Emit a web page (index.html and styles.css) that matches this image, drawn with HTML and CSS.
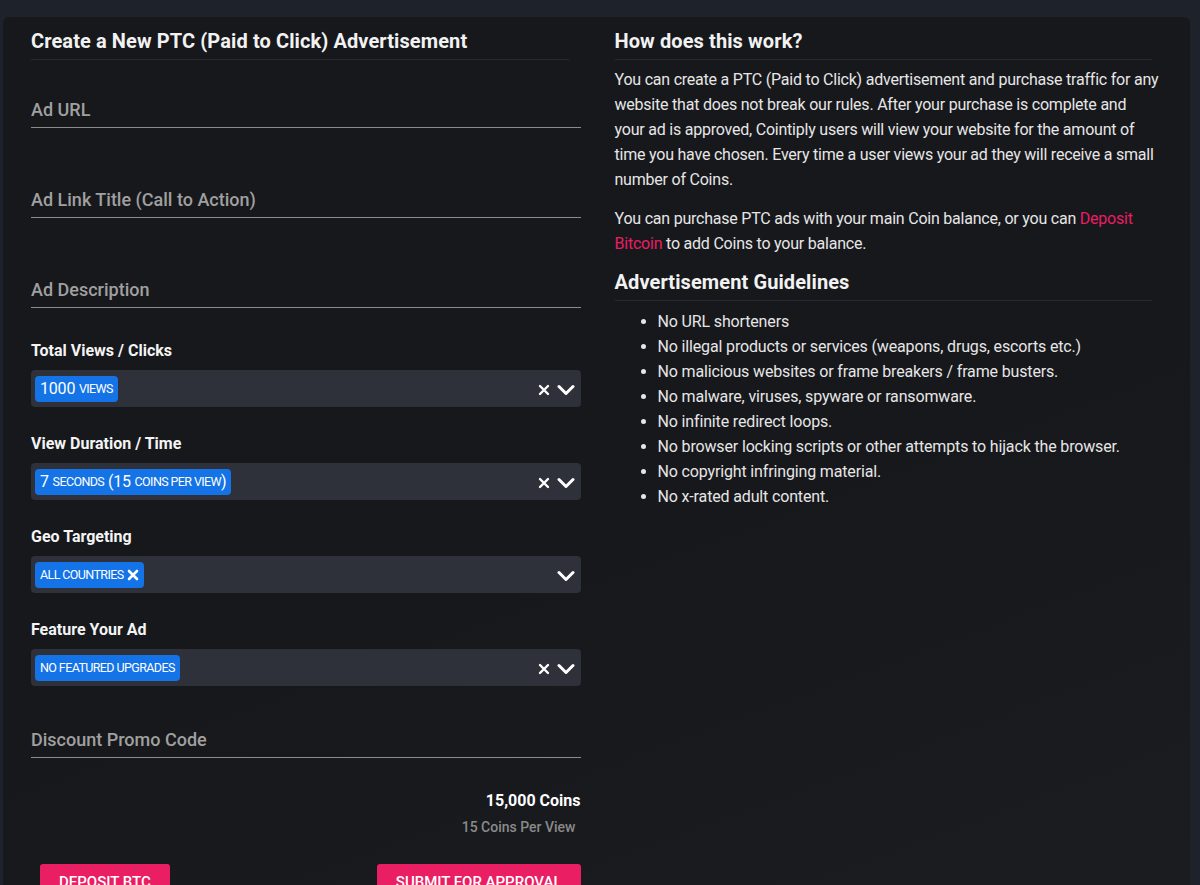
FILE: index.html
```html
<!DOCTYPE html>
<html lang="en">
<head>
    <meta charset="UTF-8">
    <meta name="viewport" content="width=device-width, initial-scale=1.0">
    <title>Create PTC Advertisement</title>
    <link rel="stylesheet" href="styles.css">
</head>
<body>

    <div class="card">
        <!-- left: the ad form -->
        <form class="ad-form">
            <h2 class="section-title">Create a New PTC (Paid to Click) Advertisement</h2>

            <div class="line-field first">Ad URL</div>
            <div class="line-field">Ad Link Title (Call to Action)</div>
            <div class="line-field">Ad Description</div>

            <label class="field-label">Total Views / Clicks</label>
            <div class="select-box">
                <span class="tag">1000 <small>views</small></span>
                <span class="select-icons">
                    <svg class="icon-clear" width="12" height="12" viewBox="0 0 12 12"><path d="M2 2L10 10M10 2L2 10"/></svg>
                    <svg class="icon-chevron" width="18" height="12" viewBox="0 0 18 12"><path d="M2 2.5L9 9.5L16 2.5"/></svg>
                </span>
            </div>

            <label class="field-label">View Duration / Time</label>
            <div class="select-box">
                <span class="tag">7 <small>seconds</small> (15 <small>coins per view</small>)</span>
                <span class="select-icons">
                    <svg class="icon-clear" width="12" height="12" viewBox="0 0 12 12"><path d="M2 2L10 10M10 2L2 10"/></svg>
                    <svg class="icon-chevron" width="18" height="12" viewBox="0 0 18 12"><path d="M2 2.5L9 9.5L16 2.5"/></svg>
                </span>
            </div>

            <label class="field-label">Geo Targeting</label>
            <div class="select-box">
                <span class="tag"><small>all countries</small><svg class="tag-remove" width="12" height="12" viewBox="0 0 12 12"><path d="M2 2L10 10M10 2L2 10"/></svg></span>
                <span class="select-icons">
                    <svg class="icon-chevron" width="18" height="12" viewBox="0 0 18 12"><path d="M2 2.5L9 9.5L16 2.5"/></svg>
                </span>
            </div>

            <label class="field-label">Feature Your Ad</label>
            <div class="select-box">
                <span class="tag"><small>no featured upgrades</small></span>
                <span class="select-icons">
                    <svg class="icon-clear" width="12" height="12" viewBox="0 0 12 12"><path d="M2 2L10 10M10 2L2 10"/></svg>
                    <svg class="icon-chevron" width="18" height="12" viewBox="0 0 18 12"><path d="M2 2.5L9 9.5L16 2.5"/></svg>
                </span>
            </div>

            <div class="line-field promo">Discount Promo Code</div>

            <div class="total">15,000 Coins</div>
            <div class="per-view">15 Coins Per View</div>

            <div class="actions">
                <button type="button" class="btn">Deposit BTC</button>
                <button type="submit" class="btn">Submit for Approval</button>
            </div>
        </form>

        <!-- right: explanation -->
        <div class="info">
            <h2 class="section-title">How does this work?</h2>
            <p>You can create a PTC (Paid to Click) advertisement and purchase traffic for any website that does not break our rules. After your purchase is complete and<br>your ad is approved, Cointiply users will view your website for the amount of time you have chosen. Every time a user views your ad they will receive a small number of Coins.</p>
            <p>You can purchase PTC ads with your main Coin balance, or you can <a href="#">Deposit Bitcoin</a> to add Coins to your balance.</p>

            <h2 class="section-title">Advertisement Guidelines</h2>
            <ul class="rules">
                <li>No URL shorteners</li>
                <li>No illegal products or services (weapons, drugs, escorts etc.)</li>
                <li>No malicious websites or frame breakers / frame busters.</li>
                <li>No malware, viruses, spyware or ransomware.</li>
                <li>No infinite redirect loops.</li>
                <li>No browser locking scripts or other attempts to hijack the browser.</li>
                <li>No copyright infringing material.</li>
                <li>No x-rated adult content.</li>
            </ul>
        </div>
    </div>

</body>
</html>
```

FILE: styles.css
```css
body {
    font-family: Roboto, "Liberation Sans", sans-serif;
    margin: 0;
    padding: 17px 10px 0 3px;
    background-color: #1e222b;
    color: #e6e6e6;
    height: 868px;
    overflow: hidden;
}

.card {
    display: grid;
    grid-template-columns: 1fr 1fr;
    column-gap: 34px;
    padding: 12px 26px 40px 28px;
    border-radius: 6px;
    background: linear-gradient(160deg, #17181c 0%, #17181c 55%, #1c1d21 100%);
    min-height: 900px;
}

.section-title {
    margin: 0 12px 0 0;
    padding-bottom: 6px;
    border-bottom: 1px solid #262a31;
    font-size: 20px;
    line-height: 24px;
    font-weight: 700;
    letter-spacing: 0.1px;
    color: #f2f2f2;
}

/* left column */
.ad-form {
    display: flex;
    flex-direction: column;
}

.line-field {
    height: 36px;
    line-height: 38px;
    margin-top: 53px;
    border-bottom: 1px solid #8c8c8c;
    font-size: 18px;
    font-weight: 500;
    color: #a0a0a0;
}

.line-field.first {
    margin-top: 31px;
}

.line-field.promo {
    margin-top: 35px;
}

.field-label {
    margin-top: 27px;
    font-size: 16px;
    line-height: 20px;
    font-weight: 700;
    color: #f4f4f4;
}

.line-field + .field-label {
    margin-top: 33px;
}

.select-box {
    display: flex;
    align-items: center;
    justify-content: space-between;
    height: 37px;
    margin-top: 9px;
    padding: 0 6px 0 4px;
    border-radius: 4px;
    background-color: #2e3139;
}

.tag {
    display: inline-flex;
    align-items: center;
    white-space: pre;
    height: 26px;
    padding: 0 5px;
    border-radius: 4px;
    background-color: #1473e6;
    color: #fff;
    font-size: 16px;
    letter-spacing: -0.2px;
}

.tag small {
    font-size: 12.5px;
    letter-spacing: -0.6px;
    text-transform: uppercase;
}

.tag-remove {
    margin-left: 3px;
}

.tag-remove path,
.icon-clear path,
.icon-chevron path {
    fill: none;
    stroke: #fff;
    stroke-linecap: round;
}

.tag-remove path {
    stroke-width: 2.6;
}

.icon-clear path {
    stroke-width: 2.4;
}

.icon-chevron path {
    stroke-width: 3;
    stroke-linejoin: round;
}

.select-icons {
    display: flex;
    align-items: center;
    gap: 7px;
    padding-top: 2px;
}

.total {
    margin-top: 33px;
    text-align: right;
    font-size: 16px;
    line-height: 20px;
    font-weight: 700;
    color: #fff;
}

.per-view {
    margin-top: 7px;
    padding-right: 5px;
    text-align: right;
    font-size: 14px;
    line-height: 18px;
    font-weight: 500;
    color: #8a8a8a;
}

.actions {
    display: flex;
    justify-content: space-between;
    margin-top: 28px;
    padding-left: 9px;
}

.btn {
    height: 36px;
    padding: 0 19px;
    border: none;
    border-radius: 3px;
    background-color: #e91e63;
    color: #fff;
    font-family: inherit;
    font-size: 15px;
    font-weight: 500;
    text-transform: uppercase;
    cursor: pointer;
}

/* right column */
.info p {
    max-width: 546px;
    margin: 7px 0 14px;
    font-size: 16px;
    line-height: 25px;
    letter-spacing: -0.22px;
}

.info p + p {
    margin-top: 0;
}

.info p + .section-title {
    margin-top: 13px;
}

.info a {
    color: #e91e63;
    text-decoration: none;
}

.rules {
    margin: 8px 0 0;
    padding-left: 43px;
    font-size: 16px;
    line-height: 25px;
    letter-spacing: -0.15px;
}
```
